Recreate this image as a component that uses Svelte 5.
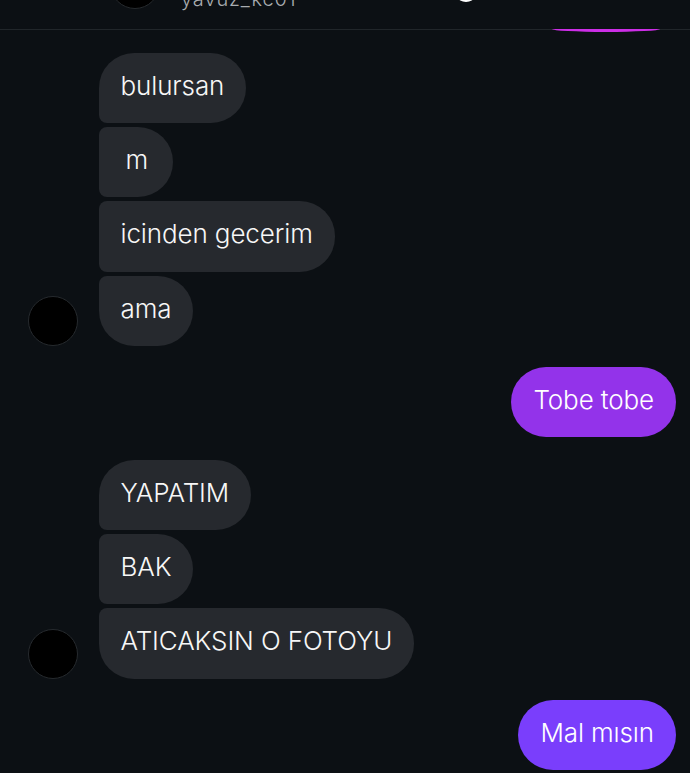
<script>
  const groups = [
    { side: 'in', items: [
      { t: 'bulursan', cls: 'first' },
      { t: 'm', cls: 'mid narrow' },
      { t: 'icinden gecerim', cls: 'mid' },
      { t: 'ama', cls: 'last' }
    ]},
    { side: 'out', items: [{ t: 'Tobe tobe', color: 'violet' }] },
    { side: 'in', items: [
      { t: 'YAPATIM', cls: 'first' },
      { t: 'BAK', cls: 'mid' },
      { t: 'ATICAKSIN O FOTOYU', cls: 'last' }
    ]},
    { side: 'out', items: [{ t: 'Mal mısın', color: 'indigo' }] }
  ];
</script>

<div class="page">
  <header class="head">
    <div class="head-avatar"></div>
    <div class="head-name">yavuz_kc01</div>
    <div class="head-dot"></div>
  </header>
  <div class="clipped-bubble"></div>
  <main class="list">
    {#each groups as g}
      {#if g.side === 'in'}
        <section class="group in">
          <div class="avatar"></div>
          <div class="stack">
            {#each g.items as m}
              <div class="bubble recv {m.cls}">{m.t}</div>
            {/each}
          </div>
        </section>
      {:else}
        <section class="group out">
          {#each g.items as m}
            <div class="bubble sent {m.color}">{m.t}</div>
          {/each}
        </section>
      {/if}
    {/each}
  </main>
</div>

<style>
  :global(body) { margin: 0; background: #0c1014; }
  .page {
    width: 690px;
    height: 773px;
    overflow: hidden;
    background: #0c1014;
    font-family: Inter, "Liberation Sans", sans-serif;
    display: flex;
    flex-direction: column;
  }
  .head {
    height: 29px;
    flex: none;
    border-bottom: 1px solid #21262a;
    overflow: hidden;
    position: relative;
  }
  .head-avatar {
    position: absolute;
    left: 110px;
    top: -41px;
    width: 48px;
    height: 48px;
    border-radius: 50%;
    background: #000;
    border: 1px solid #262a2e;
  }
  .head-name {
    position: absolute;
    left: 181px;
    top: -13px;
    font-size: 20px;
    line-height: 24px;
    font-weight: 300;
    letter-spacing: 0.9px;
    color: #a8acb0;
  }
  .head-dot {
    position: absolute;
    left: 458px;
    top: -8px;
    width: 16px;
    height: 10px;
    border-radius: 50%;
    background: #fff;
  }
  .clipped-bubble {
    flex: none;
    width: 108px;
    height: 3px;
    margin: -1px 0 0 552px;
    background: #cc2ee6;
    border-radius: 0 0 54px 54px / 0 0 3px 3px;
    position: relative;
  }
  .list {
    display: flex;
    flex-direction: column;
    padding: 21px 14px 0 28px;
  }
  .group.in {
    display: flex;
    align-items: flex-end;
    gap: 21px;
  }
  .group.out {
    display: flex;
    justify-content: flex-end;
    margin: 21px 0 23px;
  }
  .avatar {
    width: 48px;
    height: 48px;
    flex: none;
    box-sizing: content-box;
    border-radius: 50%;
    background: #000;
    border: 1px solid #262a2e;
  }
  .stack {
    display: flex;
    flex-direction: column;
    align-items: flex-start;
    gap: 4px;
  }
  .bubble {
    height: 70.2px;
    box-sizing: border-box;
    padding: 0 22px 5px 21.5px;
    display: flex;
    align-items: center;
    font-size: 26px;
    font-weight: 350;
    letter-spacing: -0.12px;
    color: #f7f7f7;
    border-radius: 35px;
    white-space: nowrap;
  }
  .recv { background: #26292e; }
  .recv.first { border-radius: 35px 35px 35px 8px; }
  .recv.mid { border-radius: 8px 35px 35px 8px; }
  .recv.last { border-radius: 8px 35px 35px 35px; }
  .recv.narrow { padding: 0 25px 5px 26.5px; }
  .sent { color: #fff; padding-left: 22.5px; }
  .violet { background: #9333ea; }
  .indigo { background: #7a3efc; }
</style>
